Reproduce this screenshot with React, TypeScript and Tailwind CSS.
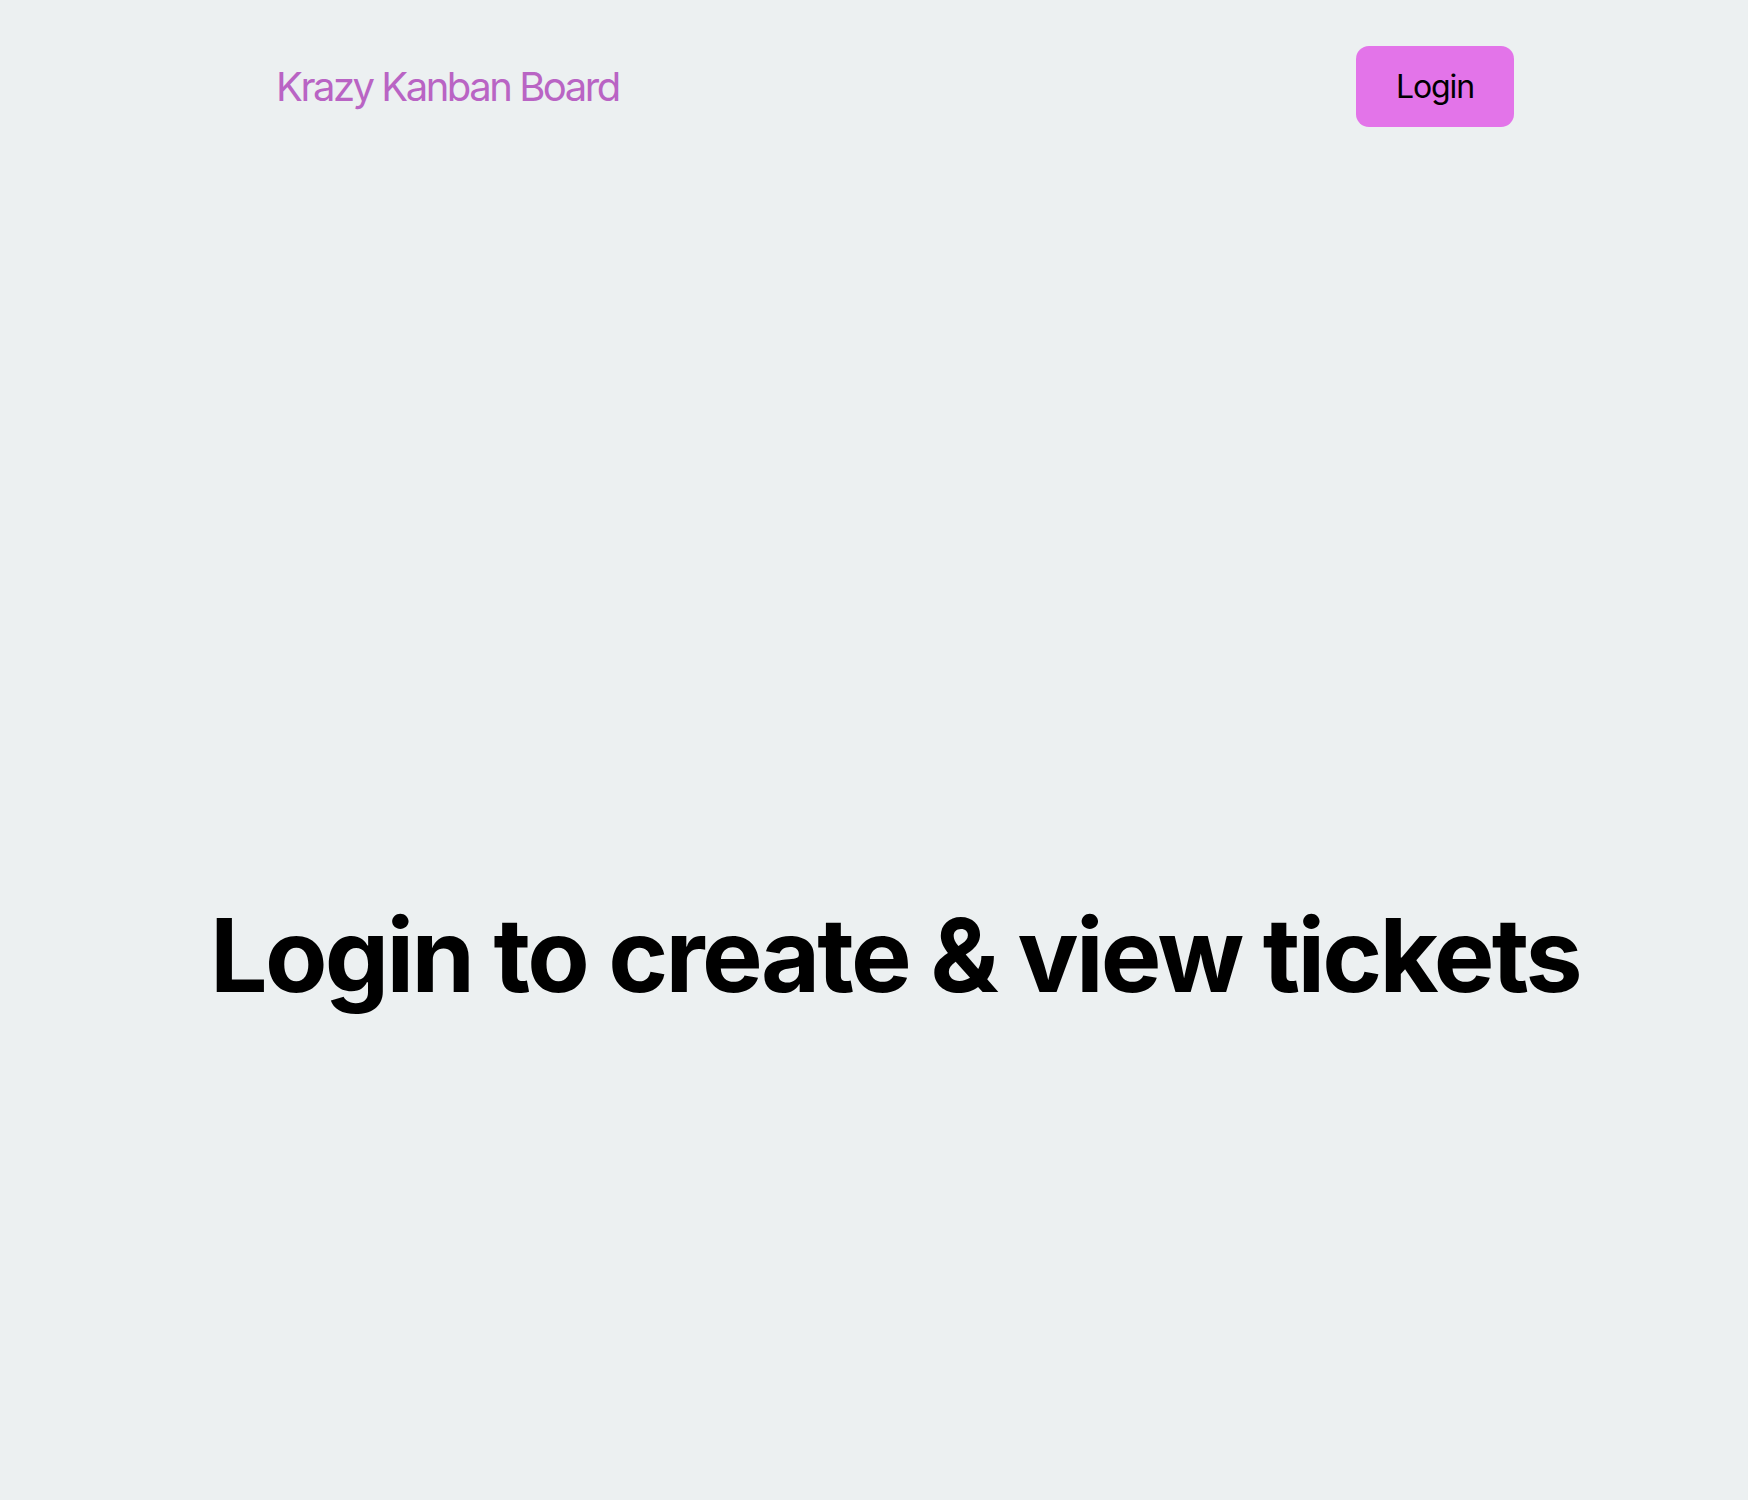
export default function App() {
  return (
    <div className="min-h-screen bg-[#ecf0f1] font-['Inter',sans-serif] text-black">
      <div className="max-w-[1280px] mx-auto pl-[42px]">
        {/* Nav */}
        <nav className="flex items-center justify-between pt-[46px]">
          <h2 className="text-[40px] leading-none text-[#b964c4] font-normal tracking-[-0.062em]">Krazy Kanban Board</h2>
          <button className="h-[81px] px-[40px] rounded-[13px] bg-[#e374e9] text-[32px] leading-none text-black tracking-[-0.035em]">
            Login
          </button>
        </nav>

        {/* Empty state */}
        <div className="pt-[777px] flex justify-center">
          <h1 className="shrink-0 text-[102px] leading-none font-bold tracking-[-0.027em] whitespace-nowrap">Login to create &amp; view tickets</h1>
        </div>
      </div>
    </div>
  );
}
